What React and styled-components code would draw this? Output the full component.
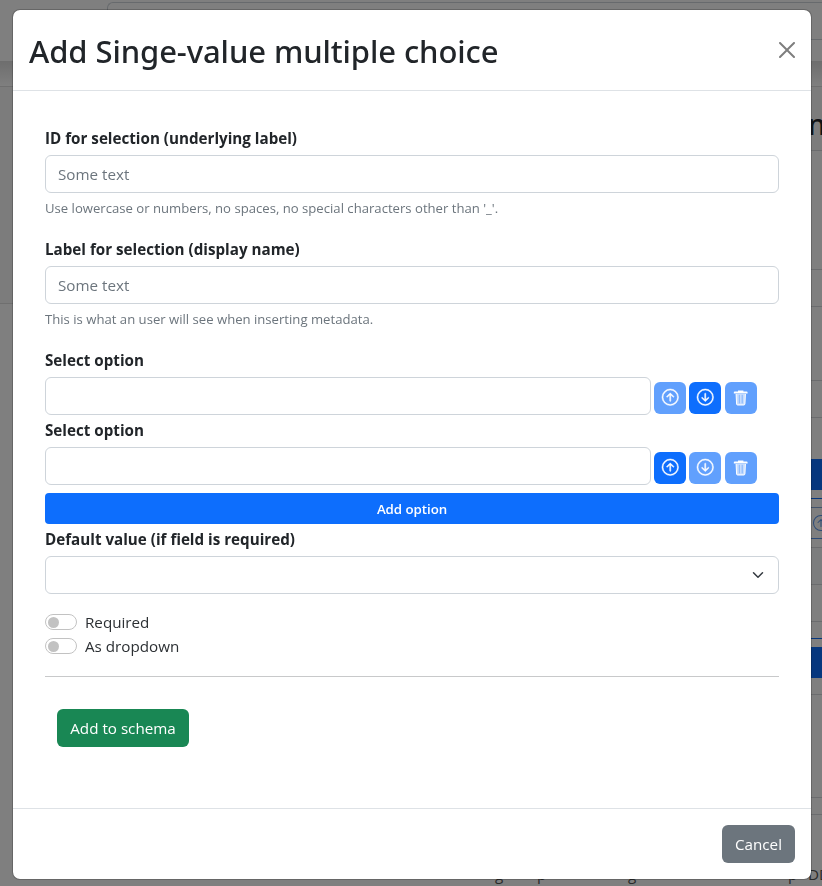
import React from "react";
import styled, { createGlobalStyle, css } from "styled-components";

const GlobalStyle = createGlobalStyle`
  *, *::before, *::after { box-sizing: border-box; }
  html, body { margin: 0; height: 100%; overflow: hidden; }
  body {
    background: #fff;
    color: #212529;
    font: 400 15.2px/24px "Open Sans", "Noto Sans", sans-serif;
  }
  button, input { font: inherit; letter-spacing: inherit; }
`;

/* Page behind the dialog */
const Page = styled.div`
  height: 886px;
  overflow: hidden;
  display: flex;
  flex-direction: column;
`;
const TopBar = styled.header`
  height: 61px;
  flex: none;
  padding: 2px 0 0 107px;
`;
const TopField = styled.div`
  height: 38px;
  border: 1px solid #ced4da;
  border-right: 0;
  border-radius: 6px 0 0 6px;
`;
const BarShadow = styled.div`
  height: 26px;
  flex: none;
  background: linear-gradient(#dcdcdc, #fff);
  border-bottom: 1px solid #dedede;
`;
const Columns = styled.div`
  flex: 1;
  min-height: 0;
  display: flex;
  justify-content: space-between;
`;
const SideCard = styled.div`
  width: 400px;
  height: 217px;
  background: #f8f8f8;
  border-bottom: 1px solid #dedede;
`;
const Preview = styled.div`
  width: 22px;
  height: 728px;
  display: flex;
  flex-direction: column;
`;
const Segment = styled.div`
  height: ${(p) => p.$h}px;
  flex: none;
  padding-left: ${(p) => p.$pad || 0}px;
  background: ${(p) => p.$fill || "transparent"};
  border-bottom: 1px solid ${(p) => p.$line || "#d6d9dc"};
`;
const PreviewTitle = styled.div`
  font: 500 28px/36px "Noto Sans", sans-serif;
  padding: 19px 0 0 8px;
  white-space: nowrap;
`;
const BottomText = styled.div`
  display: grid;
  grid-template-columns: 42px 91px 160px 20px 30px;
  height: 24px;
  flex: none;
  margin: -26px 0 0 495px;
  color: #555;
`;

/* Dialog */
const Backdrop = styled.div`
  position: fixed;
  inset: 0;
  padding: 9px 10px 0 12px;
  background: rgba(0, 0, 0, 0.5);
`;
const Dialog = styled.section`
  width: 800px;
  height: 871px;
  display: flex;
  flex-direction: column;
  background: #fff;
  background-clip: padding-box;
  border: 1px solid rgba(0, 0, 0, 0.2);
  border-radius: 8px;
`;
const DialogHeader = styled.header`
  height: 81px;
  flex: none;
  display: flex;
  align-items: center;
  justify-content: space-between;
  padding: 0 16px;
  border-bottom: 1px solid #dee2e6;
`;
const Title = styled.h1`
  margin: 2px 0 0;
  font: 500 31px/48px "Noto Sans", sans-serif;
  letter-spacing: -0.09px;
`;
const CloseButton = styled.button`
  display: flex;
  width: 16px;
  height: 16px;
  padding: 0;
  border: 0;
  background: none;
  opacity: 0.5;
`;
const DialogBody = styled.div`
  flex: 1;
  padding: 36px 32px 0;
`;
const DialogFooter = styled.footer`
  height: 71px;
  flex: none;
  display: flex;
  align-items: center;
  justify-content: flex-end;
  padding: 0 16px;
  border-top: 1px solid #dee2e6;
`;
const Field = styled.div`
  height: ${(p) => p.$h}px;
`;
const Label = styled.label`
  display: block;
  height: 24px;
  margin-bottom: 4px;
  font-weight: 700;
  line-height: 22px;
`;
const control = css`
  height: 38px;
  border: 1px solid #ced4da;
  border-radius: 6px;
  background: #fff;
`;
const Input = styled.input`
  ${control}
  display: block;
  width: ${(p) => p.$w || "100%"};
  padding: 0 12px 1px;
  outline: 0;
  &::placeholder { color: #6c757d; opacity: 1; }
`;
const Help = styled.div`
  margin-top: 5px;
  font-size: 13.13px;
  line-height: 21px;
  color: #6c757d;
`;
const OptionRow = styled.div`
  display: flex;
  align-items: flex-start;
`;
const Actions = styled.div`
  display: grid;
  grid-template-columns: 32px 32px 32px;
  column-gap: 3px;
  padding: 5px 0 0 3px;
  & > :last-child { margin-left: 1px; margin-right: -1px; }
`;
const IconButton = styled.button`
  height: 32px;
  padding: 0 0 1px;
  display: flex;
  align-items: center;
  justify-content: center;
  border: 0;
  border-radius: 6px;
  color: #fff;
  background: #0d6efd;
  opacity: ${(p) => (p.disabled ? 0.65 : 1)};
`;
const AddOption = styled.button`
  display: block;
  width: 100%;
  height: 31px;
  margin-bottom: 4px;
  padding: 1px 0 0;
  border: 0;
  border-radius: 4px;
  background: #0d6efd;
  color: #fff;
  font-size: 13.3px;
  font-weight: 600;
  letter-spacing: -0.05px;
  line-height: 21px;
`;
const Select = styled.div`
  ${control}
  display: flex;
  align-items: center;
  justify-content: flex-end;
  padding-right: 12px;
`;
const Switch = styled.label`
  display: flex;
  height: 24px;
  gap: 8px;
  opacity: 0.95;
`;
const Track = styled.span`
  width: 32px;
  height: 16px;
  margin-top: 4px;
  padding: 1.5px;
  border: 1px solid #bfbfbf;
  border-radius: 8px;
`;
const Knob = styled.span`
  display: block;
  width: 11px;
  height: 11px;
  border-radius: 50%;
  background: #bfbfbf;
`;
const Rule = styled.hr`
  height: 1px;
  margin: 18px 0 32px;
  border: 0;
  background: #c8c9ca;
`;
const Button = styled.button`
  display: block;
  width: ${(p) => p.$w}px;
  height: 38px;
  margin-left: ${(p) => p.$indent || 0}px;
  padding: 0 0 1px;
  border: 0;
  border-radius: 6px;
  color: #fff;
  background: ${(p) => (p.$tone === "success" ? "#198754" : "#6c757d")};
`;

const ARROW_UP =
  "M1 8a7 7 0 1 0 14 0A7 7 0 0 0 1 8zm15 0A8 8 0 1 1 0 8a8 8 0 0 1 16 0zm-7.5 3.5a.5.5 0 0 1-1 0V5.707L5.354 7.854a.5.5 0 1 1-.708-.708l3-3a.5.5 0 0 1 .708 0l3 3a.5.5 0 0 1-.708.708L8.5 5.707V11.5z";
const ARROW_DOWN =
  "M1 8a7 7 0 1 0 14 0A7 7 0 0 0 1 8zm15 0A8 8 0 1 1 0 8a8 8 0 0 1 16 0zM8.5 4.5a.5.5 0 0 0-1 0v5.793L5.354 8.146a.5.5 0 1 0-.708.708l3 3a.5.5 0 0 0 .708 0l3-3a.5.5 0 0 0-.708-.708L8.5 10.293V4.5z";
const CLOSE =
  "M.293.293a1 1 0 0 1 1.414 0L8 6.586 14.293.293a1 1 0 1 1 1.414 1.414L9.414 8l6.293 6.293a1 1 0 0 1-1.414 1.414L8 9.414l-6.293 6.293a1 1 0 0 1-1.414-1.414L6.586 8 .293 1.707a1 1 0 0 1 0-1.414z";

const CircleArrow = ({ up, color = "#fff" }) => (
  <svg width="16.5" height="16.5" viewBox="0 0 16 16" fill={color} stroke={color} strokeWidth=".5" overflow="visible">
    <path d={up ? ARROW_UP : ARROW_DOWN} />
  </svg>
);
const Trash = () => (
  <svg width="16" height="16" viewBox="0 0 16 16" overflow="visible">
    <path d="M3 4h9.5l-.5 10.2a1.2 1.2 0 0 1-1.2 1.1H4.7a1.2 1.2 0 0 1-1.2-1.1z" fill="#fff" fillOpacity=".65" />
    <path d="M3.1 4l.5 10q.1.9 1 .9h6.3q.9 0 1-.9l.5-10" fill="none" stroke="#fff" strokeWidth="1" />
    <path d="M6.3 4.8v8.6M9.2 4.8v8.6" stroke="#0d6efd" strokeOpacity=".75" strokeWidth=".9" />
    <path d="M5 .4h5.4v1h3.2a1 1 0 0 1 1 1v1.2H.8V2.4a1 1 0 0 1 1-1H5z" fill="#fff" />
  </svg>
);
const Chevron = () => (
  <svg width="16" height="12" viewBox="0 0 16 16" preserveAspectRatio="xMidYMid meet">
    <path fill="none" stroke="#343a40" strokeWidth="2" strokeLinecap="round" strokeLinejoin="round" d="m2 5 6 6 6-6" />
  </svg>
);

function Option({ first, height }) {
  return (
    <Field $h={height}>
      <Label>Select option</Label>
      <OptionRow>
        <Input $w="606px" />
        <Actions>
          <IconButton disabled={first} aria-label="Move up"><CircleArrow up /></IconButton>
          <IconButton disabled={!first} aria-label="Move down"><CircleArrow /></IconButton>
          <IconButton disabled aria-label="Delete"><Trash /></IconButton>
        </Actions>
      </OptionRow>
    </Field>
  );
}

function Background() {
  return (
    <Page>
      <TopBar><TopField /></TopBar>
      <BarShadow />
      <Columns>
        <SideCard />
        <Preview>
          <Segment $h={64} $fill="#f8f8f8"><PreviewTitle>n</PreviewTitle></Segment>
          <Segment $h={119} />
          <Segment $h={37} />
          <Segment $h={74} />
          <Segment $h={37} />
          <Segment $h={41} $line="transparent" />
          <Segment $h={31} $fill="#0d6efd" $line="#0d6efd" />
          <Segment $h={9} $line="#0d6efd" />
          <Segment $h={9} $line="#86a8d8" />
          <Segment $h={31} $pad={13} $line="#5a97ee">
            <svg width="16" height="30" viewBox="0 -7 16 30" fill="#5a97ee">
              <path d={ARROW_UP} />
            </svg>
          </Segment>
          <Segment $h={9} />
          <Segment $h={37} $fill="#f9fafd" />
          <Segment $h={37} />
          <Segment $h={17} $line="#0d6efd" />
          <Segment $h={8} $line="transparent" />
          <Segment $h={31} $fill="#0d6efd" $line="#0d6efd" />
          <Segment $h={17} />
          <Segment $h={103} />
          <Segment $h={17} />
        </Preview>
      </Columns>
      <BottomText>
        <span>g</span><span>p</span><span>g</span><span>p</span><span>DD</span>
      </BottomText>
    </Page>
  );
}

export default function App() {
  return (
    <>
      <GlobalStyle />
      <Background />
      <Backdrop>
        <Dialog role="dialog">
          <DialogHeader>
            <Title>Add Singe-value multiple choice</Title>
            <CloseButton aria-label="Close">
              <svg width="16" height="16" viewBox="0 0 16 16"><path d={CLOSE} /></svg>
            </CloseButton>
          </DialogHeader>
          <DialogBody>
            <Field $h={111}>
              <Label>ID for selection (underlying label)</Label>
              <Input placeholder="Some text" />
              <Help>Use lowercase or numbers, no spaces, no special characters other than '_'.</Help>
            </Field>
            <Field $h={111}>
              <Label>Label for selection (display name)</Label>
              <Input placeholder="Some text" />
              <Help>This is what an user will see when inserting metadata.</Help>
            </Field>
            <Option first height={70} />
            <Option height={74} />
            <AddOption>Add option</AddOption>
            <Field $h={82}>
              <Label>Default value (if field is required)</Label>
              <Select><Chevron /></Select>
            </Field>
            <Switch><Track><Knob /></Track>Required</Switch>
            <Switch><Track><Knob /></Track>As dropdown</Switch>
            <Rule />
            <Button $tone="success" $w={132} $indent={12}>Add to schema</Button>
          </DialogBody>
          <DialogFooter>
            <Button $w={73}>Cancel</Button>
          </DialogFooter>
        </Dialog>
      </Backdrop>
    </>
  );
}
